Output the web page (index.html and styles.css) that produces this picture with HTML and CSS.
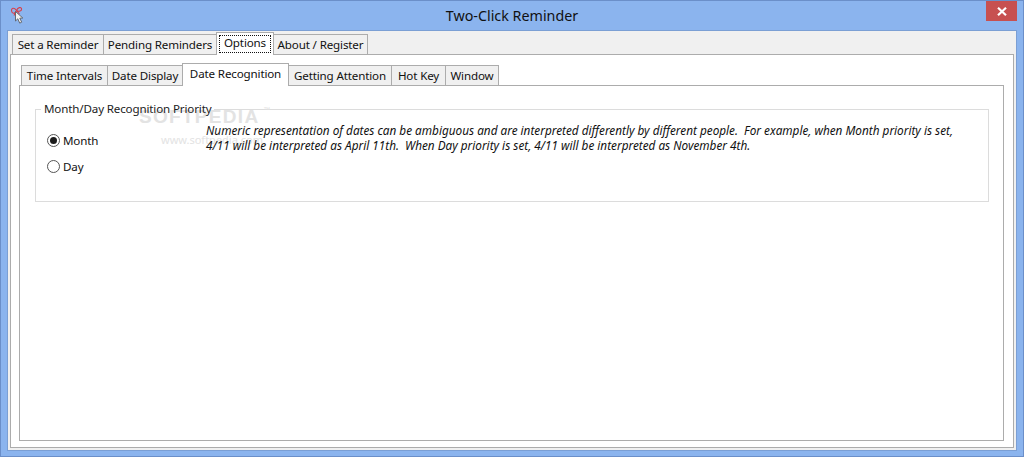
FILE: index.html
```html
<!DOCTYPE html>
<html lang="en">
<head>
<meta charset="utf-8">
<title>Two-Click Reminder</title>
<link rel="stylesheet" href="styles.css">
</head>
<body>
<div class="window">
  <header class="titlebar">
    <svg class="app-icon" width="16" height="18" viewBox="0 0 16 18">
      <path d="M5.500 3.500C3 0 0 1 .6 4 1 7 4 7 5.500 3.500ZM5.500 3.500C7 .2 10-.3 10.500 1.700 11 4.200 8 5 5.500 3.500ZM5.500 3.500 3 8.500M5.500 3.500 8.500 7" fill="none" stroke="#d8404a" stroke-width="1.100"/>
      <path d="M4.500 4.500V14l2.300-2.200 1.900 4.300 2-.9-1.900-4 3-.2z" fill="#f2f2f2" stroke="#5a5f66" stroke-width=".9"/>
    </svg>
    <h1 class="title">Two-Click Reminder</h1>
    <button class="close" aria-label="Close">
      <svg width="10" height="9" viewBox="0 0 10 9"><path d="M1 .8 9 8.200M9 .8 1 8.200" stroke="#fff" stroke-width="2.200"/></svg>
    </button>
  </header>
  <main class="client">
    <nav class="tabs outer-tabs">
      <span class="tab w-set">Set a Reminder</span>
      <span class="tab w-pending">Pending Reminders</span>
      <span class="tab active w-options"><span class="focus">Options</span></span>
      <span class="tab w-about">About / Register</span>
    </nav>
    <section class="panel outer-panel">
      <nav class="tabs inner-tabs">
        <span class="tab w-time">Time Intervals</span>
        <span class="tab w-display">Date Display</span>
        <span class="tab active w-recog">Date Recognition</span>
        <span class="tab w-attention">Getting Attention</span>
        <span class="tab w-hotkey">Hot Key</span>
        <span class="tab w-window">Window</span>
      </nav>
      <section class="panel inner-panel">
        <fieldset class="group">
          <legend class="legend">Month/Day Recognition Priority</legend>
          <div class="group-body">
            <div class="radios">
              <label class="radio"><span class="dot checked"></span>Month</label>
              <label class="radio"><span class="dot"></span>Day</label>
            </div>
            <p class="note">Numeric representation of dates can be ambiguous and are interpreted differently by different people.&nbsp; For example, when Month priority is set,<br>4/11 will be interpreted as April 11th.&nbsp; When Day priority is set, 4/11 will be interpreted as November 4th.</p>
          </div>
        </fieldset>
      </section>
    </section>
  </main>
  <div class="watermark"><span class="wm-name">SOFTPEDIA</span><span class="wm-tm">™</span><span class="wm-url">www.softpedia.com</span></div>
</div>
</body>
</html>
```
FILE: styles.css
```css
* { box-sizing: border-box; }
html, body { margin: 0; padding: 0; }
body { font-family: "Noto Sans", "Open Sans", sans-serif; font-size: 11.6px; letter-spacing: -.15px; color: #111; overflow: hidden; }
.window {
  position: relative; width: 1024px; height: 457px;
  background: #8bb4ee; border: 1px solid #6b8fc9;
  padding: 0 6px 5px; display: flex; flex-direction: column;
}
.titlebar { position: relative; height: 29px; flex: none; display: flex; justify-content: center; }
.app-icon { position: absolute; left: 4px; top: 6px; }
.title { margin: 0; font-size: 14.3px; letter-spacing: 0; font-weight: 400; line-height: 30px; color: #111; }
.close {
  position: absolute; right: 0; top: 0; width: 31px; height: 20px; padding: 0; border: 0;
  background: #c75050; display: flex; align-items: center; justify-content: center;
}
.client {
  flex: 1; min-height: 0; background: #f0f0f0; border: 1px solid #7b9fd4;
  padding: 0 2px 2px; display: flex; flex-direction: column;
}
.tabs { display: flex; align-items: flex-end; flex: none; position: relative; z-index: 1; }
.outer-tabs { height: 23px; padding-left: 2px; }
.inner-tabs { height: 22px; padding-left: 2px; }
.tab {
  height: 20px; line-height: 20px; margin-right: -1px; white-space: nowrap; text-align: center;
  background: #f0f0f0; border: 1px solid #acacac; border-bottom: 0; color: #111;
}
.tab.active {
  height: 23px; background: #fff; position: relative; z-index: 1; margin-bottom: -1px; line-height: 20px;
}
.outer-tabs .tab.active { padding: 2px 2px 0; line-height: 17px; }
.w-set { width: 92px; }
.w-pending { width: 114px; }
.w-options { width: 58px; }
.w-about { width: 95px; }
.w-time { width: 87px; }
.w-display { width: 76px; }
.w-recog { width: 107px; }
.w-attention { width: 104px; }
.w-hotkey { width: 55px; }
.w-window { width: 54px; }
.focus { display: block; border: 1px dotted #111; height: 18px; line-height: 14px; }
.panel { background: #fff; border: 1px solid #acacac; }
.outer-panel { flex: 1; min-height: 0; padding: 8px 9px 6px 8px; display: flex; flex-direction: column; }
.inner-panel { flex: 1; min-height: 0; padding: 15px 14px 0 15px; }
.group {
  margin: 0; padding: 0; height: 101px; border: 1px solid #dcdcdc; min-width: 0;
}
.legend { margin-left: 5px; padding: 0 3px; line-height: 16px; color: #222; position: relative; z-index: 2; }
.group-body { display: flex; padding: 6px 0 0 11px; }
.radios { width: 159px; flex: none; padding-top: 9px; display: flex; flex-direction: column; gap: 9px; }
.radio { display: flex; align-items: center; gap: 3px; height: 17px; }
.dot {
  width: 13px; height: 13px; border-radius: 50%; border: 1px solid #555; background: #fff;
  display: flex; align-items: center; justify-content: center;
}
.dot.checked::after { content: ""; width: 7px; height: 7px; border-radius: 50%; background: #1c1c1c; }
.note { margin: 0; font-size: 11.78px; letter-spacing: 0; font-style: italic; line-height: 15px; white-space: nowrap; position: relative; z-index: 2; }
.watermark { position: absolute; left: 138px; top: 104px; width: 140px; height: 48px; color: #e3e3e3; pointer-events: none; z-index: 1; }
.wm-name { position: absolute; left: 0; top: 0; font: 700 19px/24px "Liberation Sans", sans-serif; letter-spacing: 1.300px; }
.wm-tm { position: absolute; left: 125px; top: 0; font-size: 8px; line-height: 10px; }
.wm-url { position: absolute; left: 22px; top: 27px; font-size: 11px; line-height: 16px; letter-spacing: 0; }
```
